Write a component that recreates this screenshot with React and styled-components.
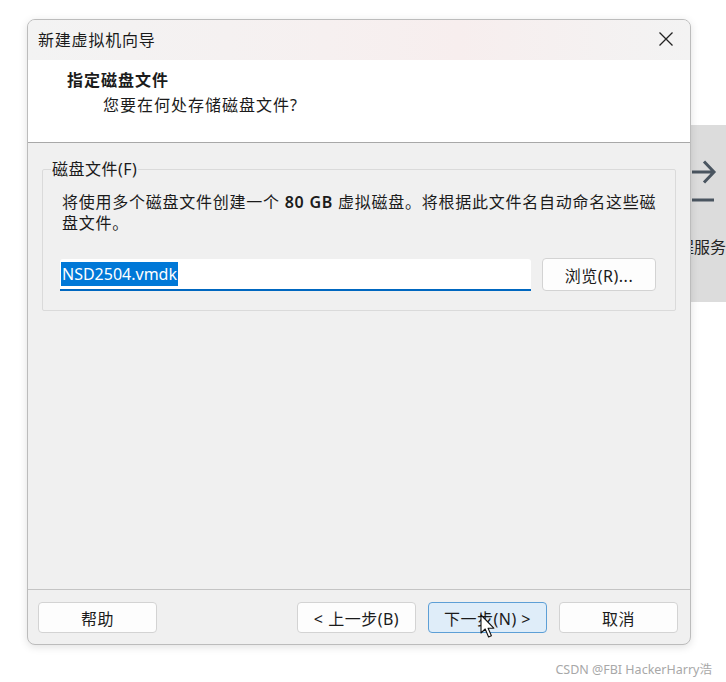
import React from 'react';
import styled, { createGlobalStyle } from 'styled-components';

const GlobalStyle = createGlobalStyle`
  html, body {
    margin: 0;
    padding: 0;
    background: #ffffff;
  }
  body {
    font-family: "Noto Sans", "Noto Sans CJK SC", sans-serif;
    color: #1b1b1b;
  }
`;

const Page = styled.div`
  position: relative;
  width: 726px;
  height: 682px;
  overflow: hidden;
  background: #ffffff;
  padding: 19px 0 0 27px;
  box-sizing: border-box;
`;

// window lying behind the dialog, only its edge is visible
const BackWindow = styled.div`
  position: absolute;
  left: 676px;
  top: 125px;
  width: 80px;
  height: 177px;
  background: #dcdcdc;
  display: flex;
  flex-direction: column;
  align-items: flex-start;
  padding-left: 14px;
  box-sizing: border-box;
  color: #4a5560;
`;

const BackIcon = styled.svg`
  margin-top: 35px;
  display: block;
`;

const BackLabel = styled.span`
  margin-top: 26px;
  margin-left: -12px;
  font-size: 16px;
  color: #222;
  white-space: nowrap;
`;

const Dialog = styled.div`
  position: relative;
  z-index: 1;
  width: 664px;
  height: 626px;
  box-sizing: border-box;
  border: 1px solid #bcbcbc;
  border-radius: 8px;
  background: #f0f0f0;
  box-shadow: 0 2px 8px rgba(0, 0, 0, 0.12);
  display: flex;
  flex-direction: column;
  overflow: hidden;
`;

const TitleBar = styled.div`
  height: 40px;
  flex: none;
  display: flex;
  align-items: center;
  justify-content: space-between;
  padding: 0 14px 2px 10px;
  box-sizing: border-box;
  background: linear-gradient(90deg, #f3f3f3 0%, #f6f0f0 45%, #f7eeee 65%, #f3f3f3 100%);
`;

const Title = styled.span`
  font-size: 16px;
  color: #1a1a1a;
  letter-spacing: 0.8px;
`;

const CloseButton = styled.button`
  border: none;
  background: transparent;
  padding: 0;
  width: 20px;
  height: 20px;
  display: flex;
  align-items: center;
  justify-content: center;
  cursor: pointer;
`;

const Header = styled.div`
  height: 83px;
  flex: none;
  box-sizing: border-box;
  background: #ffffff;
  border-bottom: 1px solid #a8a8a8;
  padding: 10px 0 0 39px;
`;

const HeaderTitle = styled.div`
  font-size: 16px;
  font-weight: 700;
  line-height: 21px;
  letter-spacing: 1px;
`;

const HeaderSub = styled.div`
  font-size: 16px;
  line-height: 21px;
  letter-spacing: 1px;
  margin: 4px 0 0 36px;
`;

const Body = styled.div`
  flex: 1;
  padding: 16px 14px 0 14px;
`;

const GroupBox = styled.fieldset`
  margin: 0;
  border: 1px solid #dadada;
  border-radius: 2px;
  padding: 12px 18px 19px 17px;
`;

const Legend = styled.legend`
  font-size: 16px;
  line-height: 21px;
  letter-spacing: 0.5px;
  padding: 0 1px;
  margin-left: -9px;
`;

const Description = styled.p`
  margin: 0 0 0 2px;
  font-size: 16px;
  line-height: 21px;
  letter-spacing: 0.75px;
  b {
    font-weight: 600;
  }
`;

const Line = styled.span`
  display: block;
  white-space: nowrap;
`;

const FileRow = styled.div`
  display: flex;
  align-items: center;
  gap: 11px;
  margin-top: 24px;
`;

const FileInput = styled.div`
  flex: none;
  width: 471px;
  height: 32px;
  box-sizing: border-box;
  background: #ffffff;
  border-bottom: 2px solid #0067c0;
  border-radius: 3px 3px 0 0;
  display: flex;
  align-items: center;
  padding-left: 1px;
`;

const Selection = styled.span`
  background: #0078d7;
  color: #ffffff;
  font-size: 16px;
  line-height: 24px;
  padding: 0 1px;
`;

const Button = styled.button`
  flex: none;
  width: ${p => p.$width || 119}px;
  height: ${p => p.$height || 31}px;
  box-sizing: border-box;
  border: 1px solid ${p => (p.$primary ? '#5d9fd6' : '#d3d3d3')};
  border-radius: 4px;
  background: ${p => (p.$primary ? '#dfedf9' : '#fdfdfd')};
  color: #1b1b1b;
  font-family: "Noto Sans", "Noto Sans CJK SC", sans-serif;
  font-size: 16px;
  letter-spacing: 0.5px;
  padding: 0;
  cursor: pointer;
  position: relative;
`;

const Footer = styled.div`
  height: 55px;
  flex: none;
  box-sizing: border-box;
  border-top: 1px solid #c4c4c4;
  display: flex;
  align-items: flex-start;
  padding: 12px 12px 0 10px;
  gap: 12px;
`;

const Spacer = styled.div`
  flex: 1;
`;

const Pointer = styled.svg`
  position: absolute;
  left: 51px;
  top: 11px;
`;

const Watermark = styled.div`
  position: absolute;
  right: 14px;
  top: 659px;
  font-size: 12.5px;
  color: #a8a8a8;
  white-space: nowrap;
`;

export default function App() {
  return (
    <>
      <GlobalStyle />
      <Page>
        <BackWindow>
          <BackIcon width="28" height="48" viewBox="0 0 28 48">
            <path d="M2 12 H24 M14 1.5 L24 12 L14 22.5" fill="none" stroke="#4a5560" strokeWidth="3" />
            <path d="M2 40 H24" stroke="#4a5560" strokeWidth="3" />
          </BackIcon>
          <BackLabel>程服务</BackLabel>
        </BackWindow>

        <Dialog>
          <TitleBar>
            <Title>新建虚拟机向导</Title>
            <CloseButton aria-label="close">
              <svg width="16" height="16" viewBox="0 0 16 16">
                <path d="M1.5 1.5 L14.5 14.5 M14.5 1.5 L1.5 14.5" stroke="#222" strokeWidth="1.3" />
              </svg>
            </CloseButton>
          </TitleBar>

          <Header>
            <HeaderTitle>指定磁盘文件</HeaderTitle>
            <HeaderSub>您要在何处存储磁盘文件?</HeaderSub>
          </Header>

          <Body>
            <GroupBox>
              <Legend>磁盘文件(F)</Legend>
              <Description>
                <Line>将使用多个磁盘文件创建一个 <b>80 GB</b> 虚拟磁盘。将根据此文件名自动命名这些磁</Line>
                <Line>盘文件。</Line>
              </Description>
              <FileRow>
                <FileInput>
                  <Selection>NSD2504.vmdk</Selection>
                </FileInput>
                <Button $width={114} $height={33}>浏览(R)...</Button>
              </FileRow>
            </GroupBox>
          </Body>

          <Footer>
            <Button>帮助</Button>
            <Spacer />
            <Button>&lt; 上一步(B)</Button>
            <Button $primary>
              下一步(N) &gt;
              <Pointer width="16" height="25" viewBox="0 0 16 25">
                <path
                  d="M1 1 L1 19 L5.2 15 L8.6 23 L11.4 21.8 L8.1 14.2 L13.8 14.2 Z"
                  fill="#ffffff"
                  stroke="#111"
                  strokeWidth="1.1"
                  strokeLinejoin="round"
                />
              </Pointer>
            </Button>
            <Button>取消</Button>
          </Footer>
        </Dialog>

        <Watermark>CSDN @FBI HackerHarry浩</Watermark>
      </Page>
    </>
  );
}
